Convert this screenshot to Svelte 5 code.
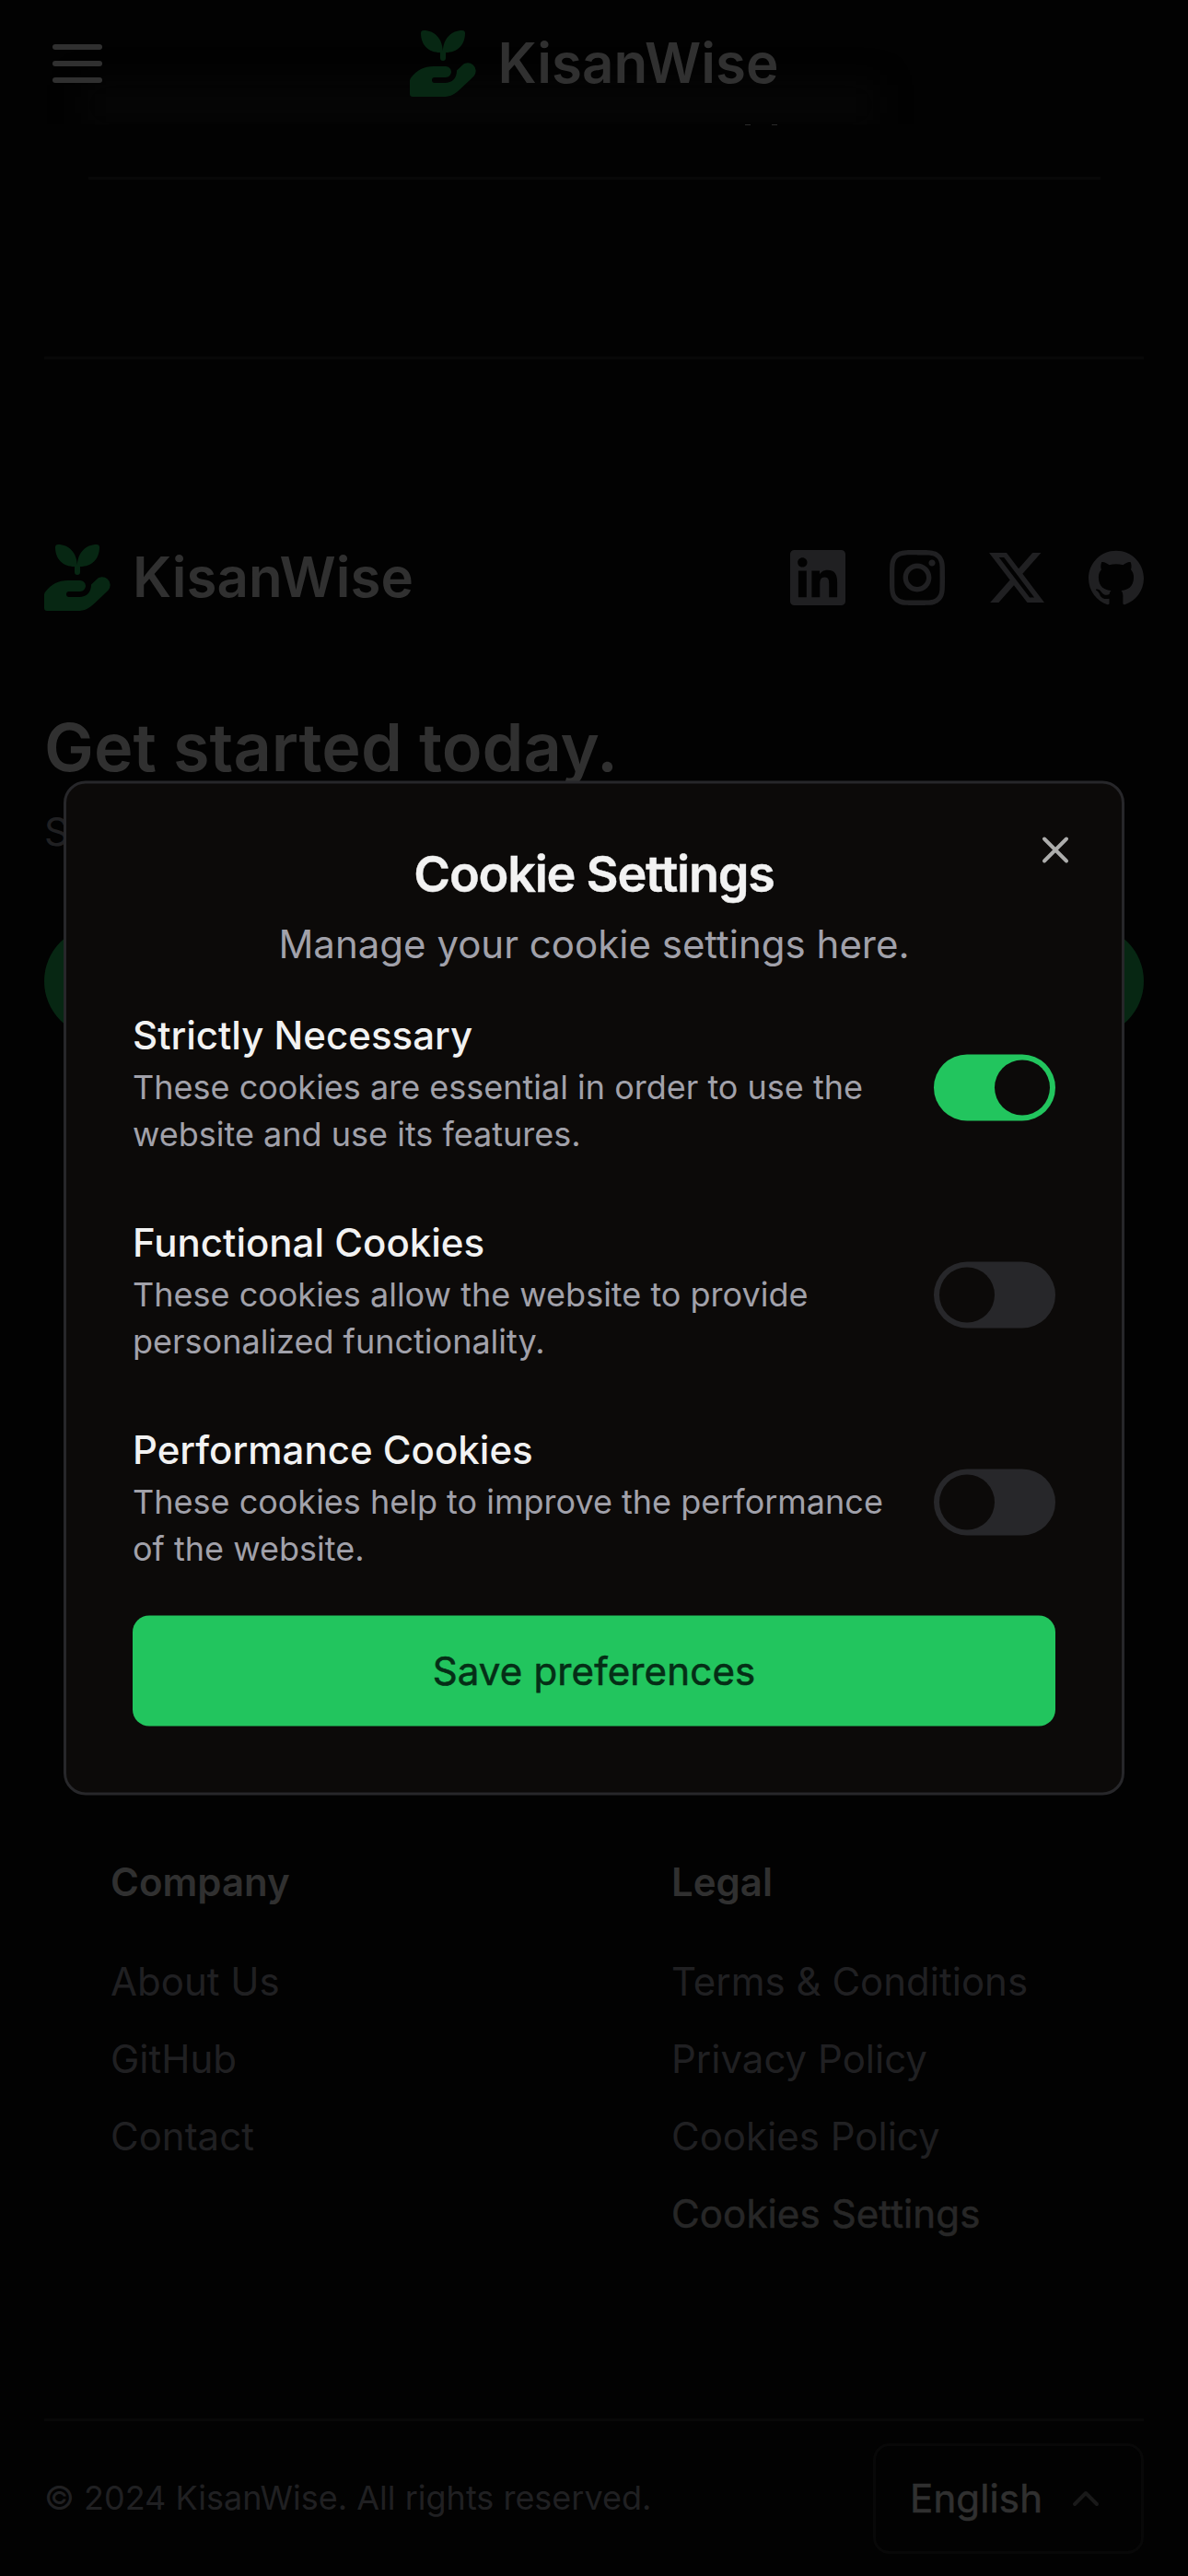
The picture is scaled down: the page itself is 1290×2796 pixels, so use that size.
<script>
  let settings = $state([
    { name: 'Strictly Necessary', text: 'These cookies are essential in order to use the website and use its features.', on: true },
    { name: 'Functional Cookies', text: 'These cookies allow the website to provide personalized functionality.', on: false },
    { name: 'Performance Cookies', text: 'These cookies help to improve the performance of the website.', on: false }
  ]);

  const company = ['About Us', 'GitHub', 'Contact'];
  const legal = ['Terms & Conditions', 'Privacy Policy', 'Cookies Policy'];

  const socials = [
    { name: 'LinkedIn', d: 'M20.447 20.452h-3.554v-5.569c0-1.328-.027-3.037-1.852-3.037-1.853 0-2.136 1.445-2.136 2.939v5.667H9.351V9h3.414v1.561h.046c.477-.9 1.637-1.85 3.37-1.85 3.601 0 4.267 2.37 4.267 5.455v6.286zM5.337 7.433c-1.144 0-2.063-.926-2.063-2.065 0-1.138.92-2.063 2.063-2.063 1.14 0 2.064.925 2.064 2.063 0 1.139-.925 2.065-2.064 2.065zm1.782 13.019H3.555V9h3.564v11.452zM22.225 0H1.771C.792 0 0 .774 0 1.729v20.542C0 23.227.792 24 1.771 24h20.451C23.2 24 24 23.227 24 22.271V1.729C24 .774 23.2 0 22.222 0h.003z' },
    { name: 'Instagram', d: 'M12 0C8.74 0 8.333.015 7.053.072 5.775.132 4.905.333 4.14.63c-.789.306-1.459.717-2.126 1.384S.935 3.35.63 4.14C.333 4.905.131 5.775.072 7.053.012 8.333 0 8.74 0 12s.015 3.667.072 4.947c.06 1.277.261 2.148.558 2.913.306.788.717 1.459 1.384 2.126.667.666 1.336 1.079 2.126 1.384.766.296 1.636.499 2.913.558C8.333 23.988 8.74 24 12 24s3.667-.015 4.947-.072c1.277-.06 2.148-.262 2.913-.558.788-.306 1.459-.718 2.126-1.384.666-.667 1.079-1.335 1.384-2.126.296-.765.499-1.636.558-2.913.06-1.28.072-1.687.072-4.947s-.015-3.667-.072-4.947c-.06-1.277-.262-2.149-.558-2.913-.306-.789-.718-1.459-1.384-2.126C21.319 1.347 20.651.935 19.86.63c-.765-.297-1.636-.499-2.913-.558C15.667.012 15.26 0 12 0zm0 2.16c3.203 0 3.585.016 4.85.071 1.17.055 1.805.249 2.227.415.562.217.96.477 1.382.896.419.42.679.819.896 1.381.164.422.36 1.057.413 2.227.057 1.266.07 1.646.07 4.85s-.015 3.585-.074 4.85c-.061 1.17-.256 1.805-.421 2.227-.224.562-.479.96-.899 1.382-.419.419-.824.679-1.38.896-.42.164-1.065.36-2.235.413-1.274.057-1.649.07-4.859.07-3.211 0-3.586-.015-4.859-.074-1.171-.061-1.816-.256-2.236-.421-.569-.224-.96-.479-1.379-.899-.421-.419-.69-.824-.9-1.38-.165-.42-.359-1.065-.42-2.235-.045-1.26-.061-1.649-.061-4.844 0-3.196.016-3.586.061-4.861.061-1.17.255-1.814.42-2.234.21-.57.479-.96.9-1.381.419-.419.81-.689 1.379-.898.42-.166 1.051-.361 2.221-.421 1.275-.045 1.65-.06 4.859-.06l.045.03zm0 3.678c-3.405 0-6.162 2.76-6.162 6.162 0 3.405 2.76 6.162 6.162 6.162 3.405 0 6.162-2.76 6.162-6.162 0-3.405-2.76-6.162-6.162-6.162zM12 16c-2.21 0-4-1.79-4-4s1.79-4 4-4 4 1.79 4 4-1.79 4-4 4zm7.846-10.405c0 .795-.646 1.44-1.44 1.44-.795 0-1.44-.646-1.44-1.44 0-.794.646-1.439 1.44-1.439.793-.001 1.44.645 1.44 1.439z' },
    { name: 'X', d: 'M18.901 1.153h3.68l-8.04 9.19L24 22.846h-7.406l-5.8-7.584-6.638 7.584H.474l8.6-9.83L0 1.154h7.594l5.243 6.932ZM17.61 20.644h2.039L6.486 3.24H4.298Z' },
    { name: 'GitHub', d: 'M12 .297c-6.63 0-12 5.373-12 12 0 5.303 3.438 9.8 8.205 11.385.6.113.82-.258.82-.577 0-.285-.01-1.04-.015-2.04-3.338.724-4.042-1.61-4.042-1.61C4.422 18.07 3.633 17.7 3.633 17.7c-1.087-.744.084-.729.084-.729 1.205.084 1.838 1.236 1.838 1.236 1.07 1.835 2.809 1.305 3.495.998.108-.776.417-1.305.76-1.605-2.665-.3-5.466-1.332-5.466-5.93 0-1.31.465-2.38 1.235-3.22-.135-.303-.54-1.523.105-3.176 0 0 1.005-.322 3.3 1.23.96-.267 1.98-.399 3-.405 1.02.006 2.04.138 3 .405 2.28-1.552 3.285-1.23 3.285-1.23.645 1.653.24 2.873.12 3.176.765.84 1.23 1.91 1.23 3.22 0 4.61-2.805 5.625-5.475 5.92.42.36.81 1.096.81 2.22 0 1.606-.015 2.896-.015 3.286 0 .315.21.69.825.57C20.565 22.092 24 17.592 24 12.297c0-6.627-5.373-12-12-12' }
  ];
</script>

{#snippet brand()}
  <a class="brand" href="#home">
    <svg viewBox="0 0 72 72" aria-hidden="true">
      <path d="M15 0c12 0 20.500 9 20.900 22.500C36.300 9 45 0 57 0q3 0 3 3C60 15.500 52 24 39 24v6a3 3 0 0 1-6 0v-6C20 24 12 15.500 12 3q0-3 3-3z" />
      <path d="M0 54.500Q0 52.500 1.500 51C8 43 15 39 26 39h13a6 6 0 0 1 0 12H27a3 3 0 0 0 0 6h11c8 0 13-5 13-13.500l5.500-5.300a8.600 8.600 0 0 1 13 11.500L55 63.500C49 69.500 44 72 36 72H3q-3 0-3-3z" />
    </svg>
    <span>KisanWise</span>
  </a>
{/snippet}

<div class="page">
  <header>
    <div class="haze"></div>
    <button class="menu" aria-label="Menu"><i></i><i></i><i></i></button>
    {@render brand()}
    <div class="spacer"></div>
  </header>

  <section class="faq"><i></i><i></i></section>

  <footer>
    <div class="top">
      {@render brand()}
      <nav class="socials">
        {#each socials as s (s.name)}
          <a href="#social" aria-label={s.name}><svg viewBox="0 0 24 24"><path d={s.d} /></svg></a>
        {/each}
      </nav>
    </div>
    <h2>Get started today.</h2>
    <p class="lead">S</p>
    <div class="cta"></div>
    <div class="links">
      <div class="col">
        <h3>Company</h3>
        {#each company as item (item)}<a href="#company">{item}</a>{/each}
      </div>
      <div class="col">
        <h3>Legal</h3>
        {#each legal as item (item)}<a href="#legal">{item}</a>{/each}
        <a class="strong" href="#cookies">Cookies Settings</a>
      </div>
    </div>
    <div class="bottom">
      <span class="copyright">© 2024 KisanWise. All rights reserved.</span>
      <button class="lang">
        English
        <svg viewBox="0 0 24 24"><path d="m18 15-6-6-6 6" /></svg>
      </button>
    </div>
  </footer>

  <div class="dialog" role="dialog" aria-label="Cookie Settings">
    <button class="close" aria-label="Close"><svg viewBox="0 0 24 24"><path d="M18 6 6 18M6 6l12 12" /></svg></button>
    <h1>Cookie Settings</h1>
    <p class="sub">Manage your cookie settings here.</p>
    <div class="rows">
      {#each settings as row (row.name)}
        <div class="row">
          <div class="copy">
            <h4>{row.name}</h4>
            <p>{row.text}</p>
          </div>
          <button class="switch" class:on={row.on} role="switch" aria-checked={row.on} aria-label={row.name} onclick={() => (row.on = !row.on)}><i></i></button>
        </div>
      {/each}
    </div>
    <button class="save">Save preferences</button>
  </div>
</div>

<style>
  :global(body) { background: #020202; }
  * { box-sizing: border-box; margin: 0; padding: 0; }
  a { color: inherit; text-decoration: none; }
  button { font: inherit; color: inherit; border: 0; background: none; }
  svg { display: block; }

  .page {
    position: relative;
    display: flex;
    flex-direction: column;
    width: 1290px;
    height: 2796px;
    overflow: hidden;
    background: #020202;
    color: #303030;
    font: 400 42px/60px Inter, sans-serif;
  }

  header {
    position: relative;
    display: flex;
    justify-content: space-between;
    align-items: center;
    height: 135px;
    padding: 0 57px 0;
    overflow: hidden;
  }
  .haze {
    position: absolute;
    left: 92px;
    top: 92px;
    width: 860px;
    height: 44px;
    background: #060606;
    filter: blur(17px);
  }
  .menu { position: relative; display: grid; gap: 12px; width: 54px; padding-top: 3px; }
  .menu i { height: 6px; border-radius: 3px; background: #303030; }
  .spacer { width: 54px; }

  .brand {
    position: relative;
    display: flex;
    align-items: center;
    gap: 24px;
    font-size: 60px;
    font-weight: 600;
    line-height: 72px;
  }
  .brand svg { width: 72px; height: 72px; fill: #072713; }
  .brand span { height: 72px; line-height: 70px; }
  header .brand { padding-top: 3px; }

  .faq { display: flex; gap: 23px; height: 60px; margin: 0 95px 0 96px; padding-left: 713px; border-bottom: 3px solid #080808; }
  .faq i { width: 6px; height: 1px; background: #2a2a2a; }

  footer { display: flex; flex-direction: column; flex: 1; margin: 192px 48px 0; border-top: 3px solid #080808; }
  .top { display: flex; justify-content: space-between; align-items: center; margin-top: 201px; }
  .socials { display: flex; gap: 48px; }
  .socials svg { width: 60px; height: 60px; fill: #202022; }
  h2 { margin-top: 104px; font-size: 72px; font-weight: 600; line-height: 87px; }
  .lead { margin-top: 19px; color: #202022; }
  .cta { height: 120px; margin-top: 72px; border-radius: 60px; background: #072713; }
  .links { display: grid; grid-template-columns: 609px 1fr; height: 1500px; padding: 888px 72px 0; }
  .col { display: flex; flex-direction: column; gap: 24px; color: #202022; }
  .col h3 { margin-bottom: 24px; font-size: 42px; font-weight: 600; color: #303030; }
  .col .strong { color: #272727; letter-spacing: 0.12px; -webkit-text-stroke: 0.6px #272727; }
  .bottom { display: flex; justify-content: space-between; align-items: center; padding-top: 24px; border-top: 3px solid #080808; color: #202022; font-size: 36px; }
  .copyright { padding-bottom: 2px; }
  .lang { display: flex; align-items: center; justify-content: space-between; width: 294px; height: 120px; padding: 0 36px 0 37px; border: 3px solid #080808; border-radius: 18px; font-size: 42px; letter-spacing: 0.14px; -webkit-text-stroke: 0.6px #303030; color: #303030; }
  .lang svg { width: 48px; height: 48px; }
  .lang path { fill: none; stroke: #191919; stroke-width: 2; stroke-linecap: round; stroke-linejoin: round; }

  .dialog {
    position: absolute;
    left: 50%;
    top: 50%;
    width: 1152px;
    height: 1101px;
    transform: translate(-50%, -50%);
    display: flex;
    flex-direction: column;
    padding: 72px;
    border: 3px solid #27272a;
    border-radius: 24px;
    background: #0c0a09;
    color: #f2f2f2;
  }
  .close { position: absolute; top: 48px; right: 48px; width: 48px; height: 48px; }
  .close path { fill: none; stroke: #adadac; stroke-width: 2; stroke-linecap: round; }
  h1 { height: 54px; font-size: 54px; font-weight: 600; line-height: 52px; letter-spacing: -1.25px; text-align: center; -webkit-text-stroke: 0.4px #f2f2f2; }
  .sub { margin-top: 18px; text-align: center; color: #a1a1aa; }
  .rows { display: flex; flex-direction: column; gap: 52px; margin-top: 39px; }
  .row { display: flex; justify-content: space-between; align-items: center; height: 173px; }
  .copy { width: 822px; padding-bottom: 10px; }
  h4 { font-size: 42px; font-weight: 500; line-height: 60px; }
  .copy p { padding-top: 1px; font-size: 36px; line-height: 51px; color: #a1a1aa; }
  .switch { display: flex; width: 132px; height: 72px; padding: 6px; border-radius: 36px; background: #27272a; }
  .switch i { width: 60px; height: 60px; border-radius: 50%; background: #0c0a09; }
  .switch.on { justify-content: flex-end; background: #22c55e; }
  .save { height: 120px; margin-top: auto; border-radius: 18px; background: #22c55e; color: #052e16; letter-spacing: 0.16px; -webkit-text-stroke: 0.6px #052e16; }
</style>
